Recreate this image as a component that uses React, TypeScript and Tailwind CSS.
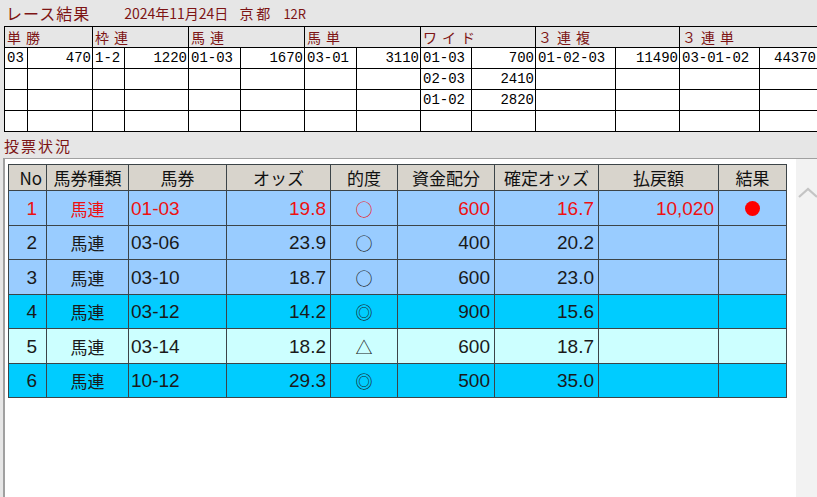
import React from "react";

const RED = "text-[#7d1414]";

const topCols = [23, 65, 32, 64, 52, 64, 52, 64, 51, 64, 80, 64, 80, 58];
const topHeads = ["単勝", "枠連", "馬連", "馬単", "ワイド", "３連複", "３連単"];

const topRows: string[][] = [
  ["03", "470", "1-2", "1220", "01-03", "1670", "03-01", "3110", "01-03", "700", "01-02-03", "11490", "03-01-02", "44370"],
  ["", "", "", "", "", "", "", "", "02-03", "2410", "", "", "", ""],
  ["", "", "", "", "", "", "", "", "01-02", "2820", "", "", "", ""],
  ["", "", "", "", "", "", "", "", "", "", "", "", "", ""],
];

const cols = [
  { w: 38, label: "No", align: "right" },
  { w: 82, label: "馬券種類", align: "center" },
  { w: 98, label: "馬券", align: "left" },
  { w: 104, label: "オッズ", align: "right" },
  { w: 67, label: "的度", align: "center" },
  { w: 97, label: "資金配分", align: "right" },
  { w: 104, label: "確定オッズ", align: "right" },
  { w: 120, label: "払戻額", align: "right" },
  { w: 68, label: "結果", align: "center" },
];

interface Bet {
  no: string;
  kind: string;
  ticket: string;
  odds: string;
  mark: string;
  amount: string;
  fixed: string;
  payout: string;
  hit: boolean;
  bg: string;
  h: string;
}

const bets: Bet[] = [
  { no: "1", kind: "馬連", ticket: "01-03", odds: "19.8", mark: "○", amount: "600", fixed: "16.7", payout: "10,020", hit: true, bg: "bg-[#99ccff]", h: "h-[35px]" },
  { no: "2", kind: "馬連", ticket: "03-06", odds: "23.9", mark: "○", amount: "400", fixed: "20.2", payout: "", hit: false, bg: "bg-[#99ccff]", h: "h-[34px]" },
  { no: "3", kind: "馬連", ticket: "03-10", odds: "18.7", mark: "○", amount: "600", fixed: "23.0", payout: "", hit: false, bg: "bg-[#99ccff]", h: "h-[35px]" },
  { no: "4", kind: "馬連", ticket: "03-12", odds: "14.2", mark: "◎", amount: "900", fixed: "15.6", payout: "", hit: false, bg: "bg-[#00ccff]", h: "h-[34px]" },
  { no: "5", kind: "馬連", ticket: "03-14", odds: "18.2", mark: "△", amount: "600", fixed: "18.7", payout: "", hit: false, bg: "bg-[#ccffff]", h: "h-[35px]" },
  { no: "6", kind: "馬連", ticket: "10-12", odds: "29.3", mark: "◎", amount: "500", fixed: "35.0", payout: "", hit: false, bg: "bg-[#00ccff]", h: "h-[34px]" },
];

function alignClass(a: string) {
  if (a === "right") return "justify-end pr-[4px]";
  if (a === "center") return "justify-center";
  return "justify-start pl-[2px]";
}

export default function App() {
  return (
    <div className="w-[817px] h-[497px] overflow-hidden bg-[#e6e6e6] flex flex-col font-['Noto_Sans_CJK_JP',sans-serif]">
      {/* title */}
      <div className={`h-[26px] shrink-0 flex items-center pl-[6px] ${RED}`}>
        <span className="text-[16px] leading-none tracking-[1px]">レース結果</span>
        <span className="ml-[34px] text-[14px] leading-none">2024年11月24日</span>
        <span className="ml-[11px] text-[14px] leading-none tracking-[3px]">京都</span>
        <span className="ml-[10px] text-[13px] leading-none">12R</span>
      </div>

      {/* result table */}
      <div className="pl-[4px] shrink-0">
        <div className="w-[820px] border-l border-t border-black">
          <div className="flex h-[21px]">
            {topHeads.map((h, i) => (
              <div
                key={h}
                className={`border-r border-b border-black flex items-center pl-[2px] text-[14px] leading-none tracking-[5px] ${RED}`}
                style={{ width: topCols[i * 2] + topCols[i * 2 + 1] }}
              >
                {h}
              </div>
            ))}
          </div>
          {topRows.map((row, r) => (
            <div key={r} className="flex h-[21px]">
              {row.map((c, i) => (
                <div
                  key={i}
                  className={`border-r border-b border-black bg-white flex items-center text-[14px] leading-none text-black font-['Liberation_Mono',monospace] ${
                    i % 2 === 0 ? "justify-start pl-[2px]" : "justify-end pr-[1px]"
                  }`}
                  style={{ width: topCols[i] }}
                >
                  {c}
                </div>
              ))}
            </div>
          ))}
        </div>
      </div>

      {/* label */}
      <div className={`h-[26px] shrink-0 flex items-center pl-[4px] text-[15px] leading-none tracking-[2px] ${RED}`}>
        投票状況
      </div>

      {/* bet panel */}
      <div className="flex-1 flex ml-[3px] border-t border-l-2 border-[#a0a0a0] bg-white">
        <div className="flex-1 pt-[5px] pl-[3px]">
          <div className="w-[779px] border-l border-t border-[#3c4448]">
            <div className="flex h-[26px] bg-[#d8d4cc]">
              {cols.map((c) => (
                <div
                  key={c.label}
                  className={`border-r border-b border-[#3c4448] flex items-center text-[17px] leading-none text-[#111] ${
                    c.label === "No" ? "justify-end pr-[4px]" : "justify-center"
                  }`}
                  style={{ width: c.w }}
                >
                  {c.label}
                </div>
              ))}
            </div>
            {bets.map((b) => {
              const cells = [b.no, b.kind, b.ticket, b.odds, b.mark, b.amount, b.fixed, b.payout, ""];
              const txt = b.hit ? "text-[#ee1111]" : "text-[#1a1a1a]";
              return (
                <div key={b.no} className={`flex ${b.h} ${b.bg}`}>
                  {cells.map((v, i) => (
                    <div
                      key={i}
                      className={`border-r border-b border-[#3c4448] flex items-center text-[19px] leading-none font-['Liberation_Sans','Noto_Sans_CJK_JP',sans-serif] ${txt} ${
                        i === 0 ? "justify-end pr-[9px]" : alignClass(cols[i].align)
                      }`}
                      style={{ width: cols[i].w }}
                    >
                      {i === 8 && b.hit ? (
                        <span className="w-[15px] h-[15px] rounded-full bg-[#ff0000]" />
                      ) : i === 4 ? (
                        <span className="text-[17px] font-['Noto_Sans_CJK_JP',sans-serif]">{v}</span>
                      ) : i === 1 ? (
                        <span className="text-[17px] font-['Noto_Sans_CJK_JP',sans-serif]">{v}</span>
                      ) : (
                        v
                      )}
                    </div>
                  ))}
                </div>
              );
            })}
          </div>
        </div>
        {/* scrollbar */}
        <div className="w-[21px] bg-[#f2f2f2] pt-[28px] pl-[1px]">
          <svg width="22" height="12" viewBox="0 0 22 12" fill="none">
            <path d="M2 10 L11 2 L20 10" stroke="#c4c4c4" strokeWidth="2.2" />
          </svg>
        </div>
      </div>
    </div>
  );
}
